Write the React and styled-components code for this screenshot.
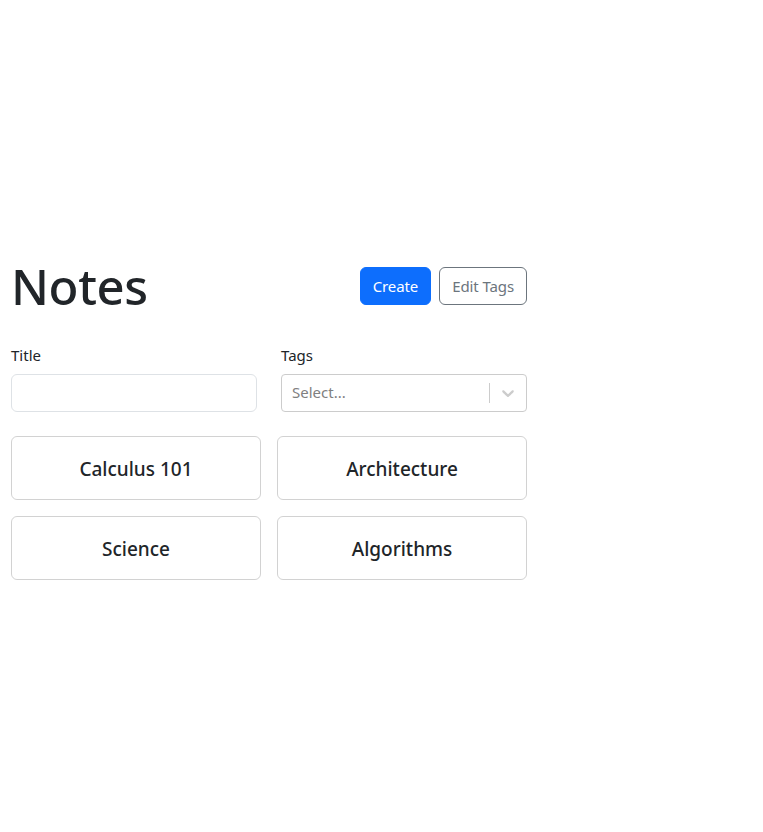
import React from 'react';
import styled, { createGlobalStyle } from 'styled-components';

const GlobalStyle = createGlobalStyle`
  body {
    margin: 0;
    font-family: "Noto Sans", "Open Sans", sans-serif;
    font-size: 16px;
    line-height: 1.5;
    color: #212529;
    background: #fff;
  }
  * {
    box-sizing: border-box;
  }
`;

const Page = styled.div`
  min-height: 100vh;
  display: flex;
  flex-direction: column;
  justify-content: center;
`;

const Container = styled.div`
  width: 539px;
  padding: 0 12px 0 11px;
`;

const Header = styled.div`
  display: flex;
  align-items: center;
  justify-content: space-between;
  margin-bottom: 23px;
`;

const Heading = styled.h1`
  margin: 0;
  font-size: 49px;
  font-weight: 500;
  line-height: 67px;
  letter-spacing: -0.4px;
`;

const Actions = styled.div`
  display: flex;
  gap: 8px;
`;

const Button = styled.button`
  font-family: inherit;
  font-size: 15px;
  line-height: 24px;
  padding: 6px 12px;
  border-radius: 6px;
  border: 1px solid ${(p) => (p.$variant === 'primary' ? '#0d6efd' : '#6c757d')};
  background: ${(p) => (p.$variant === 'primary' ? '#0d6efd' : '#fff')};
  color: ${(p) => (p.$variant === 'primary' ? '#fff' : '#6c757d')};
  letter-spacing: -0.1px;
  cursor: pointer;
`;

const FormRow = styled.div`
  display: grid;
  grid-template-columns: 1fr 1fr;
  gap: 24px;
  margin-bottom: 24px;
`;

const Field = styled.div`
  display: flex;
  flex-direction: column;
  min-width: 0;
`;

const Label = styled.label`
  font-size: 15px;
  line-height: 24px;
  margin-bottom: 7px;
`;

const TextInput = styled.input`
  width: 100%;
  height: 38px;
  border: 1px solid #dee2e6;
  border-radius: 6px;
  padding: 6px 12px;
  font-family: inherit;
  font-size: 16px;
  color: #212529;
`;

const SelectBox = styled.div`
  height: 38px;
  display: flex;
  align-items: center;
  border: 1px solid #cccccc;
  border-radius: 4px;
  background: #fff;
`;

const Placeholder = styled.div`
  flex: 1;
  padding: 2px 10px;
  color: #808080;
  font-size: 15px;
`;

const Separator = styled.span`
  align-self: stretch;
  width: 1px;
  margin: 8px 0;
  background: #cccccc;
`;

const Indicator = styled.div`
  display: flex;
  padding: 8px;
  color: #cccccc;
`;

const CardGrid = styled.div`
  display: grid;
  grid-template-columns: 1fr 1fr;
  gap: 16px;
`;

const Card = styled.div`
  height: 64px;
  display: flex;
  align-items: center;
  justify-content: center;
  padding-top: 3px;
  border: 1px solid rgba(0, 0, 0, 0.175);
  border-radius: 6px;
  font-size: 19px;
  font-weight: 500;
`;

const notes = ['Calculus 101', 'Architecture', 'Science', 'Algorithms'];

const Chevron = () => (
  <svg height="20" width="20" viewBox="0 0 20 20" fill="currentColor" aria-hidden="true">
    <path d="M4.516 7.548c0.436-0.446 1.043-0.481 1.576 0l3.908 3.747 3.908-3.747c0.533-0.481 1.141-0.446 1.574 0 0.436 0.445 0.408 1.197 0 1.615-0.406 0.418-4.695 4.502-4.695 4.502-0.217 0.223-0.502 0.335-0.787 0.335s-0.57-0.112-0.789-0.335c0 0-4.287-4.084-4.695-4.502s-0.436-1.17 0-1.615z" />
  </svg>
);

const App = () => (
  <>
    <GlobalStyle />
    <Page>
      <Container>
        <Header>
          <Heading>Notes</Heading>
          <Actions>
            <Button $variant="primary">Create</Button>
            <Button>Edit Tags</Button>
          </Actions>
        </Header>
        <FormRow>
          <Field>
            <Label htmlFor="title">Title</Label>
            <TextInput id="title" type="text" />
          </Field>
          <Field>
            <Label>Tags</Label>
            <SelectBox>
              <Placeholder>Select...</Placeholder>
              <Separator />
              <Indicator>
                <Chevron />
              </Indicator>
            </SelectBox>
          </Field>
        </FormRow>
        <CardGrid>
          {notes.map((title) => (
            <Card key={title}>{title}</Card>
          ))}
        </CardGrid>
      </Container>
    </Page>
  </>
);

export default App;
